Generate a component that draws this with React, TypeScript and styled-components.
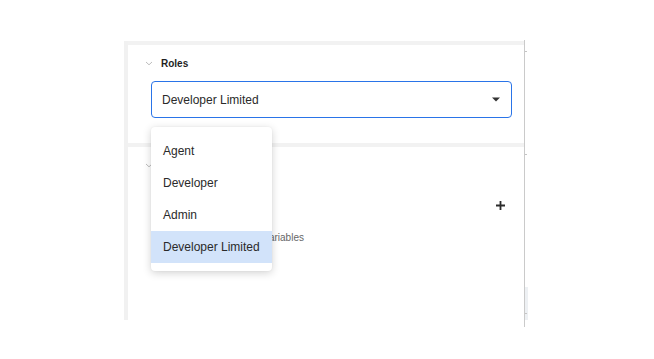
import React from "react";
import styled, { createGlobalStyle } from "styled-components";

const GlobalStyle = createGlobalStyle`
  html, body {
    margin: 0;
    background: #ffffff;
    font-family: "Liberation Sans", Arial, sans-serif;
  }
`;

const Page = styled.div`
  width: 654px;
  height: 359px;
  padding: 40px 0 0 124px;
  box-sizing: border-box;
  display: flex;
  align-items: flex-start;
`;

const LeftRail = styled.div`
  width: 4px;
  height: 279px;
  margin-top: 1px;
  background: #f1f1f1;
`;

const Panel = styled.div`
  width: 396px;
  height: 279px;
  margin-top: 1px;
  padding-top: 4px;
  box-sizing: border-box;
  background: #f2f2f2;
  display: flex;
  flex-direction: column;
  gap: 4px;
`;

const RightRule = styled.div`
  width: 4px;
  height: 287px;
  border-left: 1px solid #cacaca;
  box-sizing: border-box;
  background-repeat: no-repeat;
  background-image:
    linear-gradient(#c4c4c4, #c4c4c4),
    linear-gradient(#c4c4c4, #c4c4c4),
    linear-gradient(#c4c4c4, #c4c4c4),
    linear-gradient(#edf0f3, #edf0f3);
  background-size: 2px 1px, 2px 1px, 2px 1px, 3px 33px;
  background-position: 0 11px, 0 114px, 0 273px, 0 247px;
`;

const Section = styled.section<{ $grow?: boolean }>`
  background: #ffffff;
  height: ${(p) => (p.$grow ? "auto" : "98px")};
  flex: ${(p) => (p.$grow ? "1" : "none")};
  padding: 10px 12px 0 17px;
  box-sizing: border-box;
  display: flex;
  flex-direction: column;
`;

const Header = styled.div`
  height: 16px;
  display: flex;
  align-items: center;
  gap: 8px;
`;

const Title = styled.span`
  font-size: 10px;
  font-weight: 700;
  color: #1f1f1f;
`;

const SelectWrap = styled.div`
  position: relative;
  margin: 10px 0 0 6px;
`;

const SelectBox = styled.div`
  height: 37px;
  border: 1px solid #2a74e8;
  border-radius: 4px;
  box-sizing: border-box;
  padding: 0 11px 0 10px;
  display: flex;
  align-items: center;
  justify-content: space-between;
  font-size: 12px;
  color: #2a2a2a;
`;

const Menu = styled.ul`
  position: absolute;
  top: calc(100% + 9px);
  left: 0;
  width: 121px;
  margin: 0;
  padding: 8px 0;
  list-style: none;
  background: #ffffff;
  border-radius: 4px;
  box-shadow: 0 2px 8px rgba(0, 0, 0, 0.18), 0 0 2px rgba(0, 0, 0, 0.06);
  z-index: 5;
`;

const MenuItem = styled.li<{ $active?: boolean }>`
  height: 32px;
  padding-left: 12px;
  display: flex;
  align-items: center;
  font-size: 12px;
  color: #2a2a2a;
  background: ${(p) => (p.$active ? "#d2e3fa" : "transparent")};
`;

const AddRow = styled.div`
  height: 16px;
  margin-top: 24px;
  display: flex;
  justify-content: flex-end;
  align-items: center;
  padding-right: 7px;
`;

const Hint = styled.div`
  margin: 19px 0 0 15px;
  font-size: 10px;
  color: #666666;
`;

const Chevron = () => (
  <svg width="8" height="5" viewBox="0 0 8 5">
    <path d="M1 1 L4 3.8 L7 1" fill="none" stroke="#bdbdbd" strokeWidth="1" />
  </svg>
);

const Caret = () => (
  <svg width="8" height="5" viewBox="0 0 8 5">
    <path d="M0 0.5 H8 L4 4.5 Z" fill="#333333" />
  </svg>
);

const Plus = () => (
  <svg width="9" height="9" viewBox="0 0 9 9">
    <path d="M4.5 0 V9 M0 4.5 H9" stroke="#2b2b2b" strokeWidth="1.8" />
  </svg>
);

const roles = ["Agent", "Developer", "Admin", "Developer Limited"];

export default function App() {
  const selected = "Developer Limited";
  return (
    <>
      <GlobalStyle />
      <Page>
        <LeftRail />
        <Panel>
          <Section>
            <Header>
              <Chevron />
              <Title>Roles</Title>
            </Header>
            <SelectWrap>
              <SelectBox>
                <span>{selected}</span>
                <Caret />
              </SelectBox>
              <Menu>
                {roles.map((r) => (
                  <MenuItem key={r} $active={r === selected}>
                    {r}
                  </MenuItem>
                ))}
              </Menu>
            </SelectWrap>
          </Section>
          <Section $grow>
            <Header>
              <Chevron />
              <Title>Variables</Title>
            </Header>
            <AddRow>
              <Plus />
            </AddRow>
            <Hint>Configure environment variables</Hint>
          </Section>
        </Panel>
        <RightRule />
      </Page>
    </>
  );
}
